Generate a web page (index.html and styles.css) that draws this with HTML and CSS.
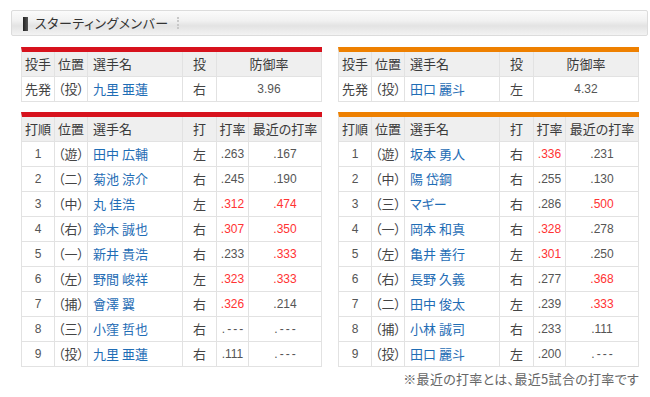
FILE: index.html
```html
<!DOCTYPE html>
<html lang="ja">
<head>
<meta charset="utf-8">
<title>スターティングメンバー</title>
<link rel="stylesheet" href="styles.css">
</head>
<body>
<div class="page">
  <div class="titlebar">
    <span class="mark"></span>
    <h2 class="title">スターティングメンバー</h2>
    <span class="sep"></span>
  </div>

  <div class="teams">
    <div class="team carp">
      <table class="tbl pitch">
        <colgroup><col class="w1"><col class="w2"><col class="w3"><col class="w4"><col class="w56"></colgroup>
        <thead><tr><th>投手</th><th>位置</th><th class="l">選手名</th><th>投</th><th>防御率</th></tr></thead>
        <tbody><tr><td>先発</td><td>（投）</td><td class="name">九里 亜蓮</td><td>右</td><td class="num">3.96</td></tr></tbody>
      </table>
      <table class="tbl bat">
        <colgroup><col class="w1"><col class="w2"><col class="w3"><col class="w4"><col class="w5"><col class="w6"></colgroup>
        <thead><tr><th>打順</th><th>位置</th><th class="l">選手名</th><th>打</th><th>打率</th><th>最近の打率</th></tr></thead>
        <tbody>
          <tr><td class="num">1</td><td>（遊）</td><td class="name">田中 広輔</td><td>左</td><td class="num">.263</td><td class="num">.167</td></tr>
          <tr><td class="num">2</td><td>（二）</td><td class="name">菊池 涼介</td><td>右</td><td class="num">.245</td><td class="num">.190</td></tr>
          <tr><td class="num">3</td><td>（中）</td><td class="name">丸 佳浩</td><td>左</td><td class="num hot">.312</td><td class="num hot">.474</td></tr>
          <tr><td class="num">4</td><td>（右）</td><td class="name">鈴木 誠也</td><td>右</td><td class="num hot">.307</td><td class="num hot">.350</td></tr>
          <tr><td class="num">5</td><td>（一）</td><td class="name">新井 貴浩</td><td>右</td><td class="num">.233</td><td class="num hot">.333</td></tr>
          <tr><td class="num">6</td><td>（左）</td><td class="name">野間 峻祥</td><td>左</td><td class="num hot">.323</td><td class="num hot">.333</td></tr>
          <tr><td class="num">7</td><td>（捕）</td><td class="name">會澤 翼</td><td>右</td><td class="num hot">.326</td><td class="num">.214</td></tr>
          <tr><td class="num">8</td><td>（三）</td><td class="name">小窪 哲也</td><td>右</td><td class="num dash">.---</td><td class="num dash">.---</td></tr>
          <tr><td class="num">9</td><td>（投）</td><td class="name">九里 亜蓮</td><td>右</td><td class="num">.111</td><td class="num dash">.---</td></tr>
        </tbody>
      </table>
    </div>

    <div class="team giants">
      <table class="tbl pitch">
        <colgroup><col class="w1"><col class="w2"><col class="w3"><col class="w4"><col class="w56"></colgroup>
        <thead><tr><th>投手</th><th>位置</th><th class="l">選手名</th><th>投</th><th>防御率</th></tr></thead>
        <tbody><tr><td>先発</td><td>（投）</td><td class="name">田口 麗斗</td><td>左</td><td class="num">4.32</td></tr></tbody>
      </table>
      <table class="tbl bat">
        <colgroup><col class="w1"><col class="w2"><col class="w3"><col class="w4"><col class="w5"><col class="w6"></colgroup>
        <thead><tr><th>打順</th><th>位置</th><th class="l">選手名</th><th>打</th><th>打率</th><th>最近の打率</th></tr></thead>
        <tbody>
          <tr><td class="num">1</td><td>（遊）</td><td class="name">坂本 勇人</td><td>右</td><td class="num hot">.336</td><td class="num">.231</td></tr>
          <tr><td class="num">2</td><td>（中）</td><td class="name">陽 岱鋼</td><td>右</td><td class="num">.255</td><td class="num">.130</td></tr>
          <tr><td class="num">3</td><td>（三）</td><td class="name">マギー</td><td>右</td><td class="num">.286</td><td class="num hot">.500</td></tr>
          <tr><td class="num">4</td><td>（一）</td><td class="name">岡本 和真</td><td>右</td><td class="num hot">.328</td><td class="num">.278</td></tr>
          <tr><td class="num">5</td><td>（左）</td><td class="name">亀井 善行</td><td>左</td><td class="num hot">.301</td><td class="num">.250</td></tr>
          <tr><td class="num">6</td><td>（右）</td><td class="name">長野 久義</td><td>右</td><td class="num">.277</td><td class="num hot">.368</td></tr>
          <tr><td class="num">7</td><td>（二）</td><td class="name">田中 俊太</td><td>左</td><td class="num">.239</td><td class="num hot">.333</td></tr>
          <tr><td class="num">8</td><td>（捕）</td><td class="name">小林 誠司</td><td>右</td><td class="num">.233</td><td class="num">.111</td></tr>
          <tr><td class="num">9</td><td>（投）</td><td class="name">田口 麗斗</td><td>左</td><td class="num">.200</td><td class="num dash">.---</td></tr>
        </tbody>
      </table>
    </div>
  </div>

  <p class="note">※最近の打率とは、最近5試合の打率です</p>
</div>
</body>
</html>
```

FILE: styles.css
```css
html, body {
  margin: 0;
  padding: 0;
  background: #fff;
}

body {
  font-family: "Noto Sans CJK JP", "Liberation Sans", sans-serif;
  font-size: 13px;
  color: #333;
  font-feature-settings: "palt";
}

.page {
  padding: 10px 2px 0 11px;
}

.titlebar {
  display: flex;
  align-items: center;
  height: 24px;
  border: 1px solid #dcdcdc;
  border-radius: 2px;
  background: linear-gradient(#fbfbfb 0%, #f1f1f1 40%, #e3e3e3 62%, #f3f3f3 100%);
  padding-left: 11px;
}

.mark {
  width: 5px;
  height: 14px;
  margin-top: 1px;
  background: linear-gradient(90deg, #222, #555);
}

.title {
  margin: 0 0 0 7px;
  font-size: 13px;
  font-weight: normal;
  color: #333;
  line-height: 24px;
  letter-spacing: 0.5px;
}

.sep {
  width: 0;
  height: 12px;
  margin-left: 8px;
  border-left: 2px dotted #c8c8c8;
}

.teams {
  display: flex;
  gap: 16px;
  margin: 11px 0 0 10px;
}

.team {
  display: flex;
  flex-direction: column;
  gap: 10px;
  width: 301px;
}

.tbl {
  width: 301px;
  table-layout: fixed;
  border-collapse: separate;
  border-spacing: 0;
  border-left: 1px solid #e2e2e2;
  border-top: 5px solid #d7121d;
}

.giants .tbl {
  border-top-color: #ee8000;
}

.w1 { width: 33px; }
.w2 { width: 33px; }
.w3 { width: 95px; }
.w4 { width: 34px; }
.w5 { width: 32px; }
.w6 { width: 73px; }
.w56 { width: 105px; }

.tbl th,
.tbl td {
  height: 24px;
  padding: 0;
  border-right: 1px solid #e2e2e2;
  border-bottom: 1px solid #e2e2e2;
  text-align: center;
  vertical-align: middle;
  white-space: nowrap;
  line-height: 24px;
  overflow: hidden;
}

.tbl th {
  background: #efefef;
  font-weight: normal;
  color: #3a3a3a;
}

.tbl td {
  color: #444;
}

.tbl .l,
.tbl .name {
  text-align: left;
  padding-left: 5px;
}

.tbl .name {
  color: #1f6db5;
}

.tbl .num {
  font-family: "Liberation Sans", sans-serif;
  font-size: 12px;
  color: #555;
}

.tbl .dash {
  letter-spacing: 2px;
  text-indent: 2px;
}

.tbl .hot {
  color: #f33;
}

.note {
  margin: 4px 0 0 0;
  width: 628px;
  text-align: right;
  color: #666;
  font-size: 13px;
  line-height: 16px;
  letter-spacing: 0.3px;
}
```
